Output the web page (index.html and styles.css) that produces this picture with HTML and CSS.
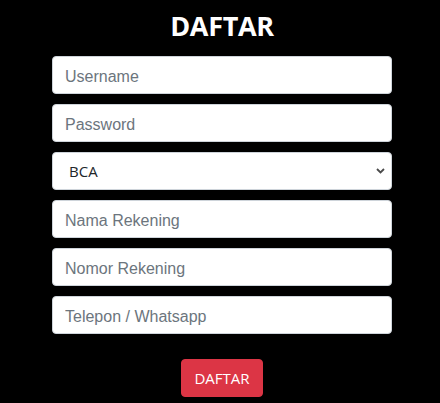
FILE: index.html
```html
<!DOCTYPE html>
<html lang="id">
<head>
<meta charset="utf-8">
<title>Daftar</title>
<link rel="stylesheet" href="styles.css">
</head>
<body>
<main class="page">
  <h2 class="title">DAFTAR</h2>
  <form class="form">
    <input class="field" type="text" placeholder="Username">
    <input class="field" type="password" placeholder="Password">
    <div class="select-wrap">
      <select class="field select">
        <option>BCA</option>
        <option>BNI</option>
        <option>BRI</option>
        <option>MANDIRI</option>
      </select>
      <svg class="chevron" width="9" height="6" viewBox="0 0 9 6"><path d="M1 1 L4.5 4.5 L8 1" fill="none" stroke="#4a4a4a" stroke-width="1.8"/></svg>
    </div>
    <input class="field" type="text" placeholder="Nama Rekening">
    <input class="field" type="text" placeholder="Nomor Rekening">
    <input class="field" type="text" placeholder="Telepon / Whatsapp">
    <div class="actions">
      <button class="btn" type="button">DAFTAR</button>
    </div>
  </form>
</main>
</body>
</html>
```

FILE: styles.css
```css
html, body {
  margin: 0;
  padding: 0;
  background: #000;
}
.page {
  width: 340px;
  margin-left: 52px;
  display: flex;
  flex-direction: column;
  align-items: stretch;
}
.title {
  margin: 9px 0 0;
  height: 47px;
  text-align: center;
  color: #fff;
  font-family: "Open Sans", sans-serif;
  font-weight: 700;
  font-size: 27px;
  line-height: 34px;
  letter-spacing: -0.3px;
}
.form {
  display: flex;
  flex-direction: column;
  gap: 10px;
}
.field {
  box-sizing: border-box;
  width: 100%;
  height: 38px;
  margin: 0;
  padding: 8px 12px 4px;
  border: 1px solid #ced4da;
  border-radius: 4px;
  background: #fff;
  font-family: "Liberation Sans", Arial, sans-serif;
  font-size: 16px;
  color: #495057;
  outline: none;
}
.field::placeholder {
  color: #6c757d;
  opacity: 1;
}
.select-wrap {
  position: relative;
}
.select {
  appearance: none;
  -webkit-appearance: none;
  padding: 6px 12px 6px 16px;
  font-family: "Open Sans", sans-serif;
  font-size: 15px;
  color: #212529;
}
.chevron {
  position: absolute;
  right: 7px;
  top: 16px;
  pointer-events: none;
}
.actions {
  display: flex;
  justify-content: center;
  padding-top: 15px;
}
.btn {
  height: 38px;
  padding: 0 12px;
  border: 1px solid #dc3545;
  border-radius: 4px;
  background: #dc3545;
  color: #fff;
  font-family: "Open Sans", sans-serif;
  font-size: 15px;
  cursor: pointer;
}
```
